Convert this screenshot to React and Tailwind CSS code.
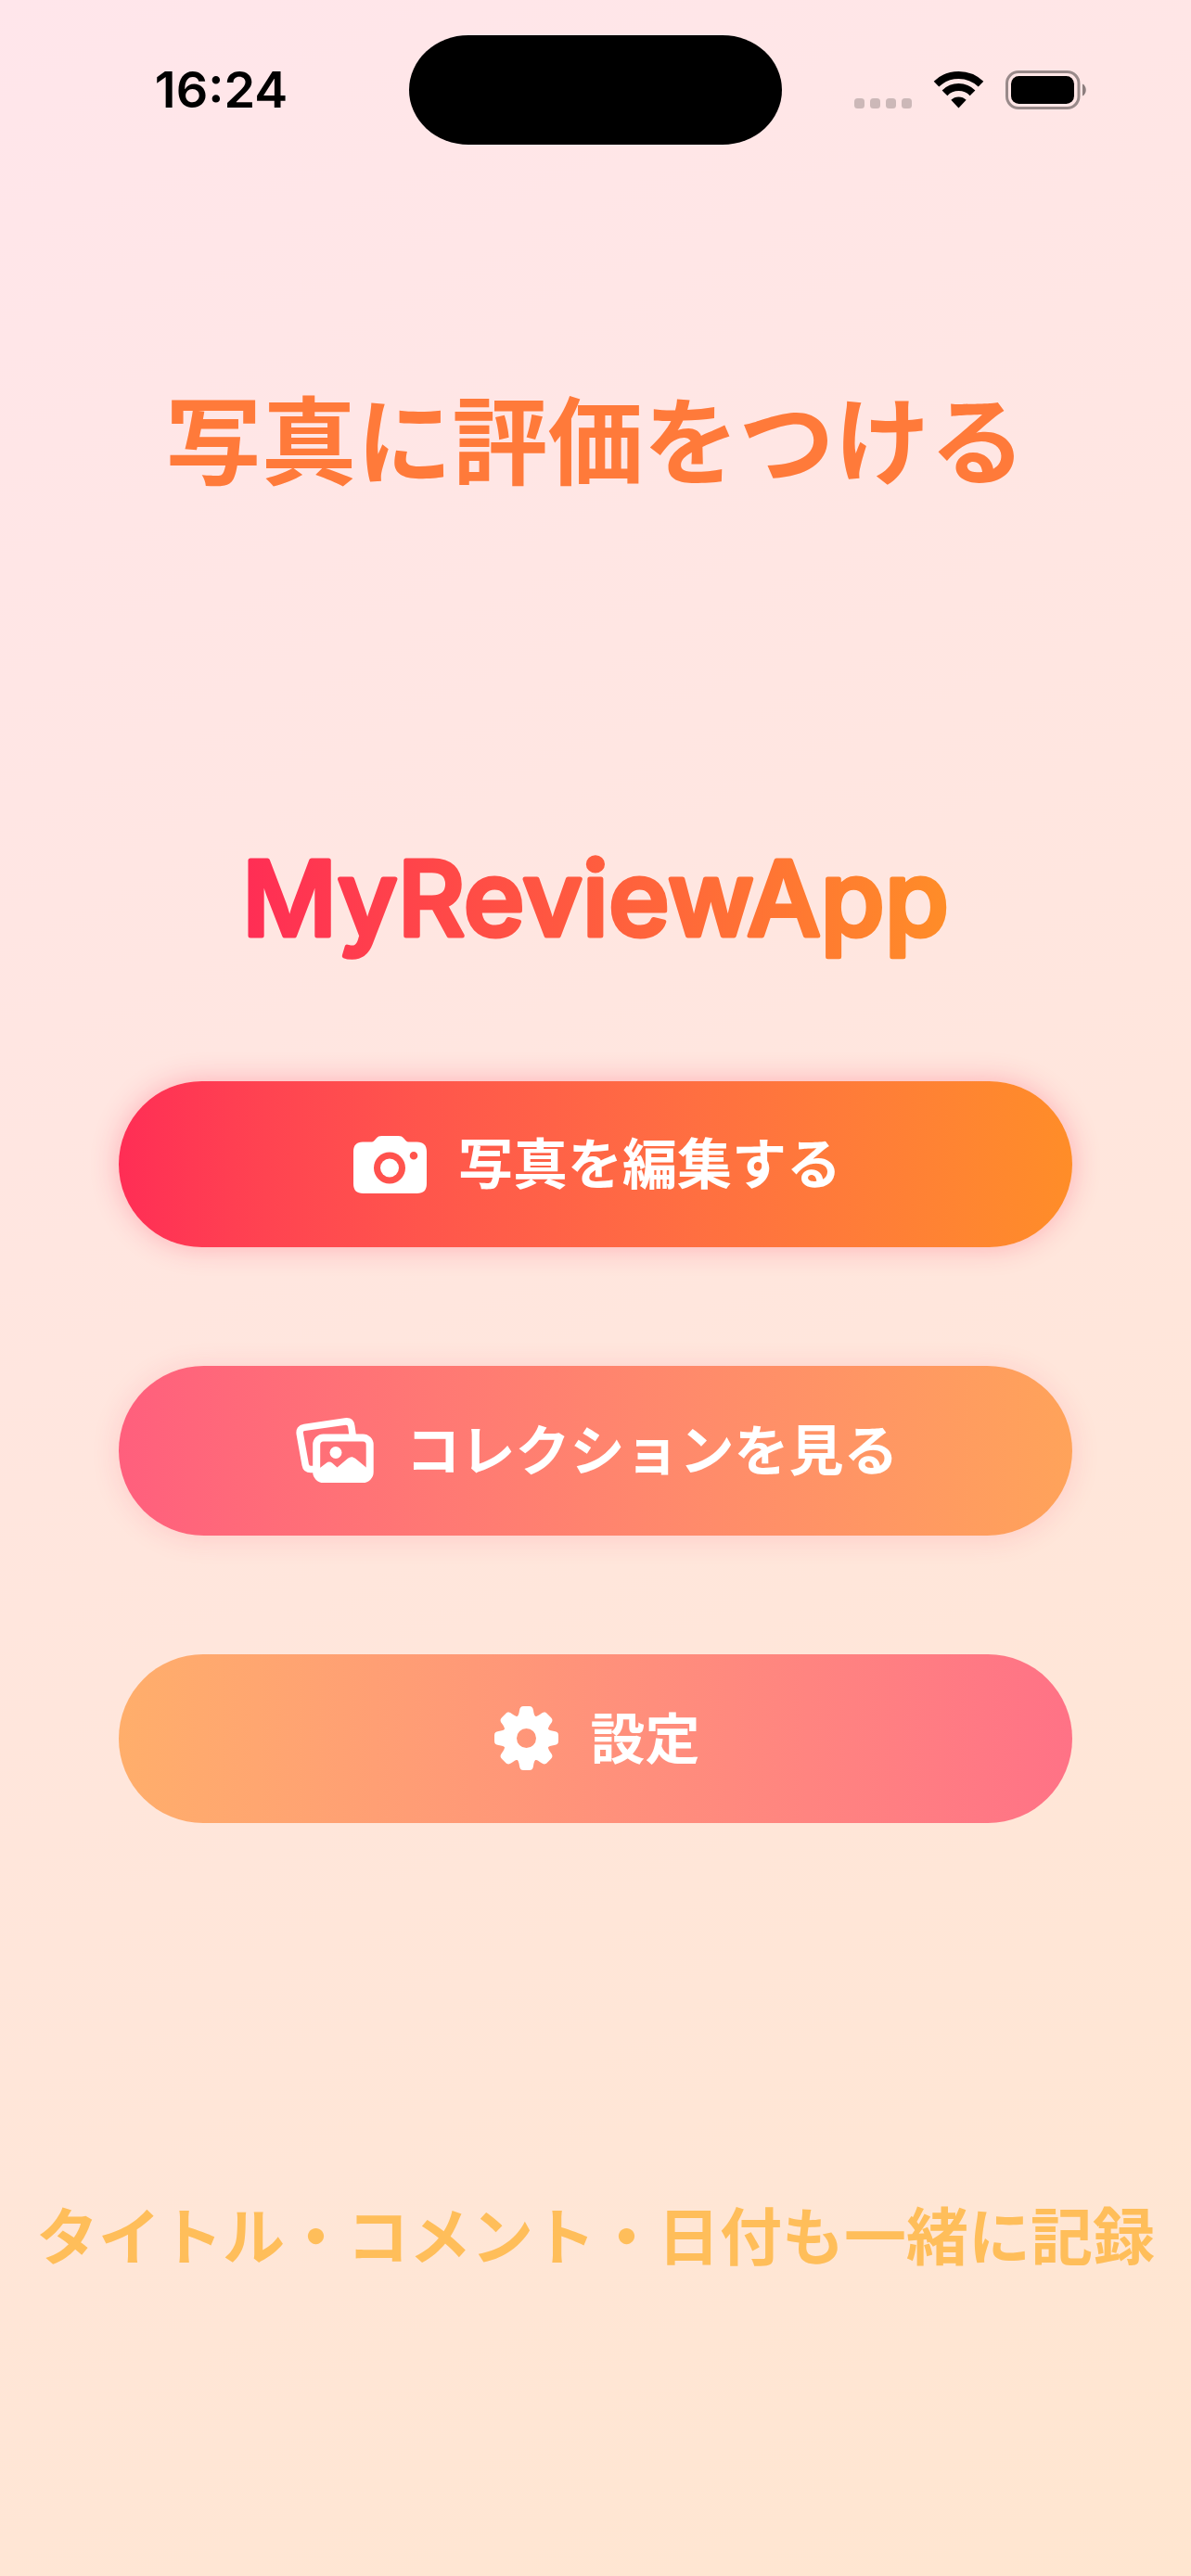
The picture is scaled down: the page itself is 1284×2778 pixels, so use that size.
function CameraIcon() {
  return (
    <svg width="79" height="62" viewBox="0 0 79 62" fill="#fff" aria-hidden="true">
      <path
        fillRule="evenodd"
        d="M10 6.500h9c1.800 0 2.800-.5 4-2l1.500-1.800C26.300.7 27.900 0 30.500 0h18c2.600 0 4.200.7 6 2.700L56 4.500c1.200 1.500 2.200 2 4 2h8.500C75.500 6.500 79 10 79 17v34.500C79 58.500 75.500 62 68.500 62h-58C3.500 62 0 58.500 0 51.500V17C0 10 3.500 6.500 10 6.500ZM39 17.500a17 17 0 1 0 0 34 17 17 0 1 0 0-34ZM65 17a4.300 4.300 0 1 0 0 8.600 4.300 4.300 0 1 0 0-8.600Z"
      />
      <circle cx="39" cy="34.500" r="10" />
    </svg>
  );
}

function PhotoStackIcon() {
  return (
    <svg width="84" height="71" viewBox="0 0 84 71" fill="none" aria-hidden="true">
      <path
        d="M19 55.500h-3c-3.500 0-5.200-1.500-5.800-5L4.300 17.500c-.7-4 .9-6.400 5-7.100L53 4c4-.6 6.200 1.100 6.800 5l1.400 10"
        stroke="#fff"
        strokeWidth="7.500"
      />
      <rect x="22.200" y="21.500" width="57.500" height="44.500" rx="7.500" stroke="#fff" strokeWidth="8" />
      <circle cx="43" cy="37.500" r="6.500" fill="#fff" />
      <path
        d="M24 55.500l8.500-6.500c2.500-1.900 4.500-1.900 7 0l5 4.500 11.500-9.700c2.600-2.200 5.200-2.200 8 0L80 57v9H24Z"
        fill="#fff"
      />
    </svg>
  );
}

const teeth = [0, 45, 90, 135, 180, 225, 270, 315];

function GearIcon() {
  return (
    <svg width="69" height="70" viewBox="0 0 69 70" aria-hidden="true">
      <circle cx="34.500" cy="34.500" r="18" fill="none" stroke="#fff" strokeWidth="15" />
      {teeth.map((deg) => (
        <path
          key={deg}
          transform={`rotate(${deg} 34.500 34.500)`}
          d="M24 12c1.800-1.500 2.500-4 3-7.500.5-3 1.500-4.500 4.500-4.500h6c3 0 4 1.500 4.500 4.500.5 3.500 1.200 6 3 7.500Z"
          fill="#fff"
        />
      ))}
    </svg>
  );
}

function StatusIcons() {
  return (
    <svg width="250" height="42" viewBox="0 0 250 42" fill="none" aria-hidden="true">
      <g fill="#000" fillOpacity=".2">
        <rect x="0" y="30" width="11" height="11" rx="3.500" />
        <rect x="17" y="30" width="11" height="11" rx="3.500" />
        <rect x="34" y="30" width="11" height="11" rx="3.500" />
        <rect x="51" y="30" width="11" height="11" rx="3.500" />
      </g>
      <g stroke="#000" strokeWidth="8">
        <path d="M88.500 14.700a34.500 34.500 0 0 1 48 0" />
        <path d="M97.500 24.400a21 21 0 0 1 30 0" />
      </g>
      <path d="M104.300 31.800a11.700 11.700 0 0 1 16.400 0L112.500 40.500Z" fill="#000" />
      <rect x="164.500" y="1.500" width="77.500" height="39" rx="12.500" stroke="#000" strokeOpacity=".4" strokeWidth="3" />
      <rect x="169" y="6" width="68" height="30" rx="8.500" fill="#000" />
      <path d="M246 14.500c5 2.200 5 10.800 0 13Z" fill="#000" fillOpacity=".45" />
    </svg>
  );
}

// Wordmark: the round joins of the stroke soften the letter ends
function Logo() {
  return (
    <svg height="144" className="w-full overflow-visible">
      <defs>
        <linearGradient id="logo" x1="0" x2="1" y1="0" y2="0">
          <stop offset="0" stopColor="#ff2d55" />
          <stop offset="1" stopColor="#ff8d28" />
        </linearGradient>
      </defs>
      <text
        x="50%"
        y="113"
        textAnchor="middle"
        fill="url(#logo)"
        stroke="url(#logo)"
        strokeWidth="5"
        strokeLinejoin="round"
        className="text-[112px] font-medium"
      >
        MyReviewApp
      </text>
    </svg>
  );
}

const menu = [
  {
    label: '写真を編集する',
    Icon: CameraIcon,
    style: 'from-[#ff2d55] to-[#ff8d28] shadow-[0_0_30px_rgba(255,45,85,0.3)]',
  },
  {
    label: 'コレクションを見る',
    Icon: PhotoStackIcon,
    style: 'from-[#ff5f7d] to-[#ffa35a] shadow-[0_3px_30px_rgba(255,45,85,0.15)]',
  },
  {
    label: '設定',
    Icon: GearIcon,
    style: 'from-[#ffae6b] to-[#ff7286]',
  },
];

export default function App() {
  return (
    <div className="flex min-h-screen flex-col bg-[linear-gradient(155deg,#ffe6eb,#ffe6d0)] font-['Inter','Noto_Sans_CJK_JP',sans-serif]">
      <header className="flex items-center pt-[38px]">
        <div className="flex flex-1 justify-center pl-9 text-[54px] leading-none font-semibold text-black">
          <time>16:24</time>
        </div>
        <div className="h-[118px] w-[402px] rounded-[64px/59px] bg-black" />
        <div className="flex flex-1 justify-center pr-9">
          <StatusIcons />
        </div>
      </header>

      <main className="flex flex-col px-32 text-center">
        <p className="mt-[250px] self-center text-[103px] leading-[144px] font-bold whitespace-nowrap text-[#ff7a3a]">
          写真に評価をつける
        </p>
        <h1 className="mt-[346px]">
          <Logo />
        </h1>
        <nav className="mt-[126px] flex flex-col gap-32">
          {menu.map(({ label, Icon, style }) => (
            <button
              key={label}
              type="button"
              className={`flex items-center justify-center gap-[34px] rounded-full bg-linear-to-r py-14 pl-1 text-[59px] leading-[67px] font-bold text-white ${style}`}
            >
              <Icon />
              <span>{label}</span>
            </button>
          ))}
        </nav>
      </main>

      <footer className="mt-[399px] text-center text-[67px] leading-[96px] font-bold whitespace-nowrap text-[#ffbe5a]">
        タイトル・コメント・日付も一緒に記録
      </footer>
    </div>
  );
}
